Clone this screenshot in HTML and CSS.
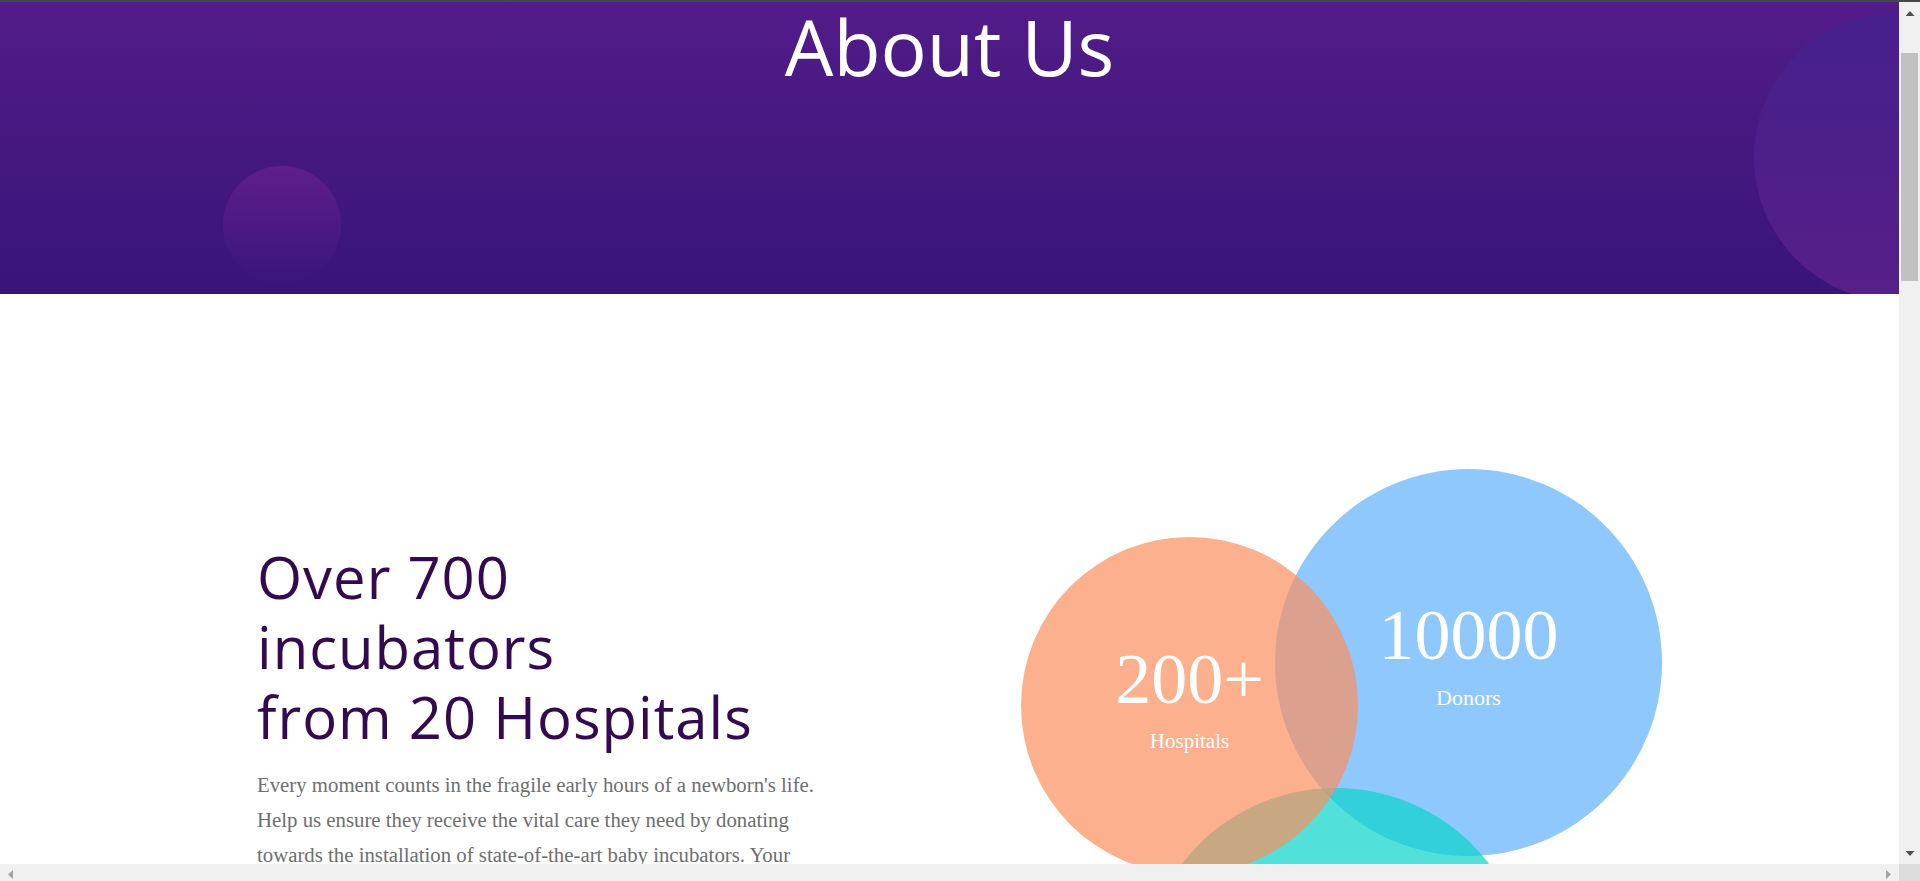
FILE: index.html
```html
<!DOCTYPE html>
<html lang="en">
<head>
<meta charset="utf-8">
<title>About Us</title>
<link rel="stylesheet" href="styles.css">
</head>
<body>
<div class="screen">
  <div class="topline"></div>
  <div class="middle">
    <div class="viewport">
      <header class="hero">
        <span class="bubble bubble-left"></span>
        <span class="bubble bubble-right"></span>
        <h1 class="hero-title">About Us</h1>
      </header>
      <section class="about">
        <div class="about-text">
          <h2 class="about-heading">Over 700<br>incubators<br>from 20 Hospitals</h2>
          <p class="about-copy">Every moment counts in the fragile early hours of a newborn's life. Help us ensure they receive the vital care they need by donating towards the installation of state-of-the-art baby incubators. Your generosity gives the smallest patients the warmth, safety and strength they need to grow.</p>
        </div>
        <div class="stats">
          <div class="circle circle-blue">
            <span class="stat-number">10000</span>
            <span class="stat-label">Donors</span>
          </div>
          <div class="circle circle-teal"></div>
          <div class="circle circle-orange">
            <span class="stat-number">200+</span>
            <span class="stat-label stat-label-small">Hospitals</span>
          </div>
        </div>
      </section>
    </div>
    <div class="vscroll">
      <div class="sb-btn sb-up"><span class="arrow arrow-up"></span></div>
      <div class="sb-thumb"></div>
      <div class="sb-fill"></div>
      <div class="sb-btn sb-down"><span class="arrow arrow-down"></span></div>
    </div>
  </div>
  <div class="bottom">
    <div class="hscroll">
      <span class="arrow arrow-left"></span>
      <span class="arrow arrow-right"></span>
    </div>
    <div class="corner"></div>
  </div>
</div>
</body>
</html>
```

FILE: styles.css
```css
html, body {
  margin: 0;
  padding: 0;
  overflow: hidden;
  background: #ffffff;
}

.screen {
  width: 1920px;
  height: 881px;
  display: flex;
  flex-direction: column;
}

.topline {
  height: 2px;
  background: #474747;
  flex: none;
}

.middle {
  flex: 1;
  display: flex;
  min-height: 0;
}

.viewport {
  flex: 1;
  overflow: hidden;
  background: #ffffff;
}

/* ---------- hero ---------- */
.hero {
  position: relative;
  height: 292px;
  box-sizing: border-box;
  padding-top: 6px;
  overflow: hidden;
  background: linear-gradient(180deg, #521c89 0%, #45187f 50%, #38147b 100%);
}

.bubble {
  position: absolute;
  border-radius: 50%;
}

.bubble-left {
  left: 223px;
  top: 164px;
  width: 118px;
  height: 118px;
  background: linear-gradient(180deg, #5f1e8b 0%, #4a1983 55%, #38157c 100%);
}

.bubble-right {
  left: 1754px;
  top: 10px;
  width: 290px;
  height: 290px;
  background: linear-gradient(180deg, #46208e 0%, #4d1f8a 50%, #581f88 100%);
}

.hero-title {
  position: relative;
  margin: 0;
  text-align: center;
  color: #ffffff;
  font-family: "Open Sans", "Noto Sans", sans-serif;
  font-weight: 400;
  font-size: 77px;
  line-height: 77px;
}

/* ---------- about ---------- */
.about {
  display: flex;
  align-items: flex-start;
  padding: 175px 0 0 257px;
}

.about-text {
  width: 578px;
  margin-top: 73px;
}

.about-heading {
  margin: 0;
  color: #330a4f;
  font-family: "Open Sans", "Noto Sans", sans-serif;
  font-weight: 400;
  font-size: 58px;
  line-height: 70px;
  letter-spacing: 1px;
}

.about-copy {
  margin: 15px 0 0;
  color: #6e6e6e;
  font-family: "Liberation Serif", "Times New Roman", serif;
  font-size: 20.8px;
  line-height: 35px;
}

.stats {
  position: relative;
  width: 641px;
  height: 705px;
  margin-left: 186px;
  flex: none;
}

.circle {
  position: absolute;
  border-radius: 50%;
  display: flex;
  flex-direction: column;
  align-items: center;
  justify-content: center;
  box-sizing: border-box;
  padding-bottom: 15px;
  color: #ffffff;
  font-family: "Liberation Serif", "Times New Roman", serif;
}

.circle-blue {
  left: 254px;
  top: 0;
  width: 387px;
  height: 387px;
  background: rgba(95, 176, 252, 0.7);
}

.circle-teal {
  left: 121px;
  top: 319px;
  width: 387px;
  height: 387px;
  background: rgba(8, 211, 202, 0.7);
}

.circle-orange {
  left: 0;
  top: 68px;
  width: 337px;
  height: 337px;
  background: rgba(251, 142, 94, 0.7);
}

.stat-number {
  font-size: 72px;
  line-height: 72px;
}

.stat-label {
  margin-top: 14px;
  font-size: 22px;
  line-height: 26px;
}

.stat-label-small {
  font-size: 21px;
  line-height: 25px;
}

/* ---------- fake scrollbars ---------- */
.vscroll {
  width: 21px;
  flex: none;
  background: #f0f0f0;
  display: flex;
  flex-direction: column;
}

.sb-btn {
  height: 17px;
  flex: none;
  display: flex;
  justify-content: center;
  box-sizing: border-box;
}

.sb-up {
  padding-top: 9px;
  padding-left: 1px;
}

.sb-down {
  padding-top: 4px;
  padding-left: 1px;
}

.sb-thumb {
  margin: 34px 2px 0 2px;
  height: 228px;
  background: #c1c1c1;
  flex: none;
}

.sb-fill {
  flex: 1;
}

.arrow {
  display: block;
  background: #505050;
}

.arrow-up {
  width: 9px;
  height: 5px;
  clip-path: polygon(50% 0, 100% 100%, 0 100%);
}

.arrow-down {
  width: 9px;
  height: 5px;
  clip-path: polygon(0 0, 100% 0, 50% 100%);
}

.bottom {
  height: 17px;
  flex: none;
  display: flex;
}

.hscroll {
  flex: 1;
  background: #f0f0f0;
  display: flex;
  justify-content: space-between;
  align-items: flex-start;
  padding: 6px 8px 0 8px;
}

.arrow-left {
  width: 5px;
  height: 9px;
  background: #a3a3a3;
  clip-path: polygon(100% 0, 100% 100%, 0 50%);
}

.arrow-right {
  width: 5px;
  height: 9px;
  background: #a3a3a3;
  clip-path: polygon(0 0, 100% 50%, 0 100%);
}

.corner {
  width: 21px;
  flex: none;
  background: #dcdcdc;
}
```
